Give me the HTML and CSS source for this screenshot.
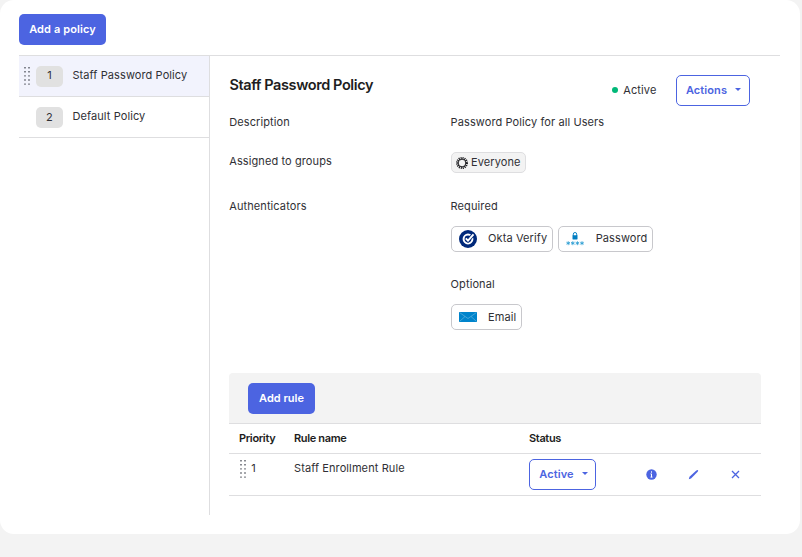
FILE: index.html
```html
<!DOCTYPE html>
<html lang="en">
<head>
<meta charset="utf-8">
<title>Authenticator policies</title>
<link rel="stylesheet" href="styles.css">
</head>
<body>
<main class="card">
  <div class="toolbar"><button class="btn primary add-policy">Add a policy</button></div>
  <div class="layout">
    <nav class="policies">
      <a class="policy selected">
        <svg class="grip" width="6" height="19" viewBox="0 0 6 19"><path d="M1 0v19M5 0v19"/></svg>
        <span class="num first-num">1</span><span class="policy-name">Staff Password Policy</span>
      </a>
      <a class="policy">
        <span class="grip"></span>
        <span class="num">2</span><span class="policy-name">Default Policy</span>
      </a>
    </nav>
    <section class="detail">
      <header class="head">
        <h2>Staff Password Policy</h2>
        <span class="state"><i class="dot"></i><span class="state-text">Active</span></span>
        <button class="btn outline actions">Actions<i class="caret"></i></button>
      </header>
      <dl class="facts">
        <dt>Description</dt>
        <dd class="desc">Password Policy for all Users</dd>
        <dt>Assigned to groups</dt>
        <dd class="groups"><span class="tag">
          <svg width="12" height="12" viewBox="0 0 12 12"><circle class="ring" cx="6" cy="6" r="4.6"/><circle class="ring-core" cx="6" cy="6" r="4"/></svg><span class="everyone">Everyone</span></span></dd>
        <dt>Authenticators</dt>
        <dd>
          <p class="required">Required</p>
          <div class="chips">
            <span class="chip verify"><svg width="18" height="18" viewBox="0 0 18 18"><circle cx="9" cy="9" r="9" fill="#00297a"/><circle cx="9" cy="9" r="4.4" fill="none" stroke="#fff" stroke-width="2"/><path d="M7 8.500l2 2 6.300-7" fill="none" stroke="#00297a" stroke-width="3.600"/><path d="M6.800 8.300l2.200 2.300 5.500-6.300" fill="none" stroke="#fff" stroke-width="1.900"/></svg><span>Okta Verify</span></span>
            <span class="chip password"><svg width="18" height="18" viewBox="0 0 18 18"><path d="M7.300 6V4.200a1.700 1.700 0 0 1 3.400 0V6" fill="none" stroke="#0b86c8" stroke-width="1"/><rect x="6.500" y="5.200" width="5" height="4.300" rx=".4" fill="#007dc1"/><path d="M2.200 11.200v4M.4 12.200l3.600 2M4 12.200l-3.600 2M6.800 11.200v4M5 12.200l3.600 2M8.600 12.200l-3.600 2M11.400 11.200v4M9.600 12.200l3.600 2M13.200 12.200l-3.600 2M16 11.200v4M14.200 12.200l3.600 2M17.800 12.200l-3.600 2" fill="none" stroke="#259bd2" stroke-width=".8"/></svg><span>Password</span></span>
          </div>
          <p class="optional">Optional</p>
          <div class="chips">
            <span class="chip email"><svg width="18" height="18" viewBox="0 0 18 18"><rect y="4" width="18" height="10" fill="#0084cc"/><path d="M.5 4.500L9 10.500l8.500-6M.5 13.500l5.500-5M17.500 13.500l-5.500-5" fill="none" stroke="#75bce0" stroke-width=".6"/></svg><span>Email</span></span>
          </div>
        </dd>
      </dl>
      <div class="rules-bar"><button class="btn primary add-rule">Add rule</button></div>
      <div class="row thead"><span class="th-priority">Priority</span><span class="th-name">Rule name</span><span class="th-status">Status</span></div>
      <div class="row rule">
        <span class="priority"><svg class="grip" width="6" height="19" viewBox="0 0 6 19"><path d="M1 0v19M5 0v19"/></svg>1</span>
        <span class="rule-name">Staff Enrollment Rule</span>
        <span class="status"><button class="btn outline active-btn">Active<i class="caret"></i></button></span>
        <span class="icons">
          <svg width="11" height="11" viewBox="0 0 11 11"><circle cx="5.500" cy="5.500" r="5.200" fill="#4c64e1"/><path d="M5.500 2.300v1.400M4.500 4.900h1v3.200M4.500 8.100h2" fill="none" stroke="#fff" stroke-width="1"/></svg>
          <svg width="11" height="11" viewBox="0 0 11 11"><path d="M.8 10.200l.7-2.400 6.800-6.300 1.500-.6.400.4-.5 1.500L3 9.400z" fill="#4c64e1"/></svg>
          <svg width="11" height="11" viewBox="0 0 11 11"><path d="M2 2l7 7M9 2L2 9" fill="none" stroke="#4c64e1" stroke-width="1.300"/></svg>
        </span>
      </div>
    </section>
  </div>
</main>
</body>
</html>
```
FILE: styles.css
```css
* { box-sizing: border-box; }
body {
  margin: 0;
  background: #f3f3f3;
  color: #303035;
  font: 11px/16px Inter, "Liberation Sans", sans-serif;
  letter-spacing: 0.1px;
  white-space: nowrap;
}
.card {
  width: 800px;
  height: 534px;
  padding: 14px 20px 0 19px;
  background: #fff;
  border-radius: 14px;
}
.toolbar { height: 41px; }
.btn {
  display: flex;
  align-items: center;
  justify-content: center;
  height: 31px;
  padding: 0 0 2px;
  border: 0;
  border-radius: 5px;
  font: 600 11px/16px Inter, sans-serif;
}
.primary { background: #4c64e1; color: #fff; }
.outline { background: #fff; color: #4c64e1; border: 1px solid #4c64e1; letter-spacing: 0.1px; padding-left: 1px; }
.add-policy { width: 87px; letter-spacing: 0.1px; }
.layout { display: flex; border-top: 1px solid #dedee0; }
.policies { width: 191px; height: 459px; border-right: 1px solid #dedee0; }
.policy {
  display: flex;
  align-items: center;
  height: 41px;
  padding-left: 5px;
  border-bottom: 1px solid #dedee0;
}
.selected { background: #f2f3fd; }
.grip { width: 6px; flex: none; }
.grip path { stroke: #555861; stroke-width: 1.4; stroke-dasharray: 1.4 2.7; }
.num {
  width: 27px;
  height: 21px;
  margin: 0 9.4px 0 6px;
  border-radius: 5px;
  background: #e1e1e1;
  text-align: center;
  line-height: 21px;
}
.first-num { line-height: 19px; }
.policy-name { margin-top: -2px; }
.detail { width: 532px; margin-left: 19px; }
.head { display: flex; height: 50px; padding: 19px 11px 0 0; }
h2 {
  flex: 1;
  margin: 0;
  padding-left: 0.4px;
  font: 600 14.500px/20px Inter, sans-serif;
  letter-spacing: -0.400px;
  color: #1d1d21;
}
.state { display: flex; align-items: center; height: 31px; margin-right: 19.6px; }
.state-text { margin-top: -2px; }
.dot { width: 6px; height: 6px; margin: -1px 5px 0 0; border-radius: 50%; background: #00b878; }
.actions { width: 74px; }
.caret { margin-left: 8px; border: 3px solid transparent; border-top-color: #4c64e1; border-bottom: 0; }
.facts { display: grid; grid-template-columns: 221.6px 1fr; grid-template-rows: 39px 45px 175px; height: 267px; margin: 0; padding-top: 8px; }
.facts dt { padding-left: 0.2px; }
.facts dd, .facts p { margin: 0; }
.tag {
  display: flex;
  align-items: center;
  width: 75px;
  height: 21px;
  margin-top: -1px;
  padding-left: 4px;
  border: 1px solid #dedee0;
  border-radius: 5px;
  background: #f3f3f3;
}
.everyone { margin: -2px 0 0 3.4px; }
.ring { fill: none; stroke: #1d1d21; stroke-width: 2.800; stroke-dasharray: 1 .8; }
.ring-core { fill: none; stroke: #1d1d21; stroke-width: 0.800; }
.chips { display: flex; gap: 5px; margin-top: 12px; }
.optional { padding-top: 24px; }
.chip {
  display: flex;
  align-items: center;
  gap: 11.5px;
  height: 26px;
  padding-left: 7px;
  border: 1px solid #c8c8cc;
  border-radius: 5px;
}
.chip span { margin-top: -2px; }
.chip.email span { margin-top: 0; }
.verify { width: 102px; }
.password { width: 95px; padding-left: 7.6px; }
.email { width: 71px; }
.rules-bar { height: 50px; padding: 10px 19px; background: #f3f3f3; border-radius: 4px 4px 0 0; }
.add-rule { width: 67px; }
.row { display: grid; grid-template-columns: 55px 235px 95px 1fr; padding-left: 10px; }
.thead {
  height: 31px;
  padding-bottom: 2px;
  border: solid #dedee0;
  border-width: 1px 0;
  align-items: center;
  font-weight: 600;
  letter-spacing: -0.350px;
  color: #1d1d21;
}
.rule { height: 42px; border-bottom: 1px solid #dedee0; }
.priority { display: flex; gap: 5.3px; padding: 6px 0 0 1px; align-items: flex-start; }
.rule-name { padding-top: 6px; }
.status { padding-top: 5px; }
.active-btn { width: 67px; padding-left: 2px; }
.icons { display: flex; gap: 31px; align-items: center; padding-left: 22.4px; }
```
